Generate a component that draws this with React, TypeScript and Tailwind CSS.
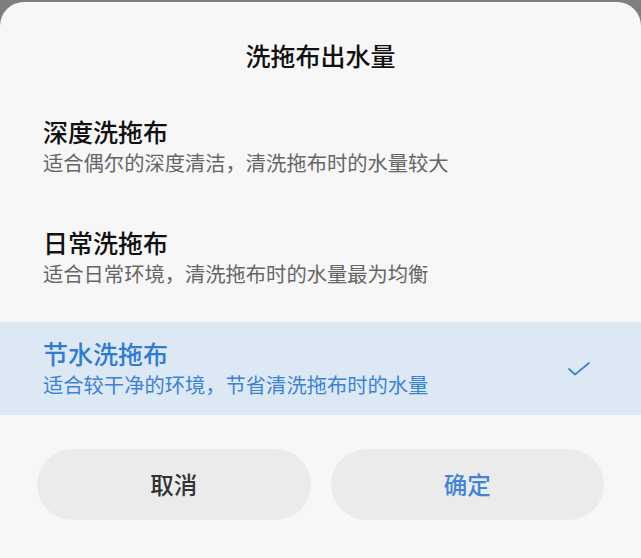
const OPTIONS = [
  { key: 'deep', title: '深度洗拖布', desc: '适合偶尔的深度清洁，清洗拖布时的水量较大' },
  { key: 'daily', title: '日常洗拖布', desc: '适合日常环境，清洗拖布时的水量最为均衡' },
  { key: 'save', title: '节水洗拖布', desc: '适合较干净的环境，节省清洗拖布时的水量' },
];

const CheckIcon = () => (
  <svg width="22" height="14" viewBox="0 0 22 14" fill="none">
    <path d="M1 7 L7 12.5 L21 1" stroke="#3a80d6" strokeWidth="1.7" strokeLinecap="round" strokeLinejoin="round" />
  </svg>
);

export default function App() {
  const selected = 'save';

  return (
    <div
      className="w-[641px] h-[558px] bg-[#7f7f7f] pt-[2px] overflow-hidden"
      style={{ fontFamily: '"Noto Sans CJK SC", "Noto Sans", sans-serif' }}
    >
      <div className="h-full bg-[#f7f7f7] rounded-t-[24px] flex flex-col">
        <div className="h-[98px] pt-[8px] flex items-center justify-center">
          <h1 className="text-[25px] leading-[32px] font-medium text-[#111]">洗拖布出水量</h1>
        </div>

        <div className="flex flex-col gap-[18px]">
          {OPTIONS.map((opt) => {
            const active = opt.key === selected;
            return (
              <div
                key={opt.key}
                className={`h-[93px] flex items-center pl-[43px] pr-[51px] ${active ? 'bg-[#dde8f5]' : ''}`}
              >
                <div className="flex-1 flex flex-col">
                  <span className={`text-[25px] leading-[31px] font-medium ${active ? 'text-[#2f7cd5]' : 'text-[#111]'}`}>
                    {opt.title}
                  </span>
                  <span className={`text-[20.3px] leading-[31px] ${active ? 'text-[#3a84d8]' : 'text-[#666]'}`}>
                    {opt.desc}
                  </span>
                </div>
                {active && <CheckIcon />}
              </div>
            );
          })}
        </div>

        <div className="mt-[34px] px-[37px] flex gap-[20px]">
          <button className="flex-1 h-[71px] rounded-full bg-[#ebebeb] text-[23.5px] font-medium text-[#333]">
            取消
          </button>
          <button className="flex-1 h-[71px] rounded-full bg-[#ebebeb] text-[23.5px] font-medium text-[#4285d8]">
            确定
          </button>
        </div>
      </div>
    </div>
  );
}
